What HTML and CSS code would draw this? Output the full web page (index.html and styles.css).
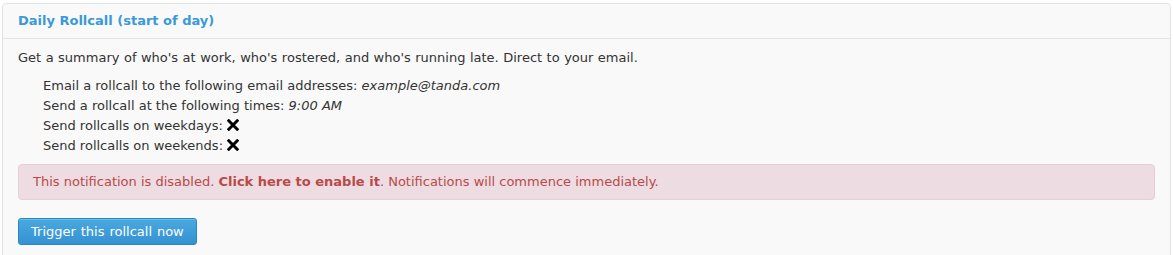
FILE: index.html
```html
<!DOCTYPE html>
<html>
<head>
<meta charset="utf-8">
<link rel="stylesheet" href="styles.css">
</head>
<body>
<div class="panel">
  <div class="panel-header">
    <h3 class="panel-title">Daily Rollcall (start of day)</h3>
  </div>
  <div class="panel-body">
    <p class="intro">Get a summary of who's at work, who's rostered, and who's running late. Direct to your email.</p>
    <ul class="settings">
      <li>Email a rollcall to the following email addresses: <em>example@tanda.com</em></li>
      <li>Send a rollcall at the following times: <em>9:00 AM</em></li>
      <li>Send rollcalls on weekdays: <svg class="cross" viewBox="0 0 12 12" width="12" height="12"><path d="M1.8 1.8 L10.2 10.2 M10.2 1.8 L1.8 10.2" stroke="#000" stroke-width="3" stroke-linecap="square"/></svg></li>
      <li>Send rollcalls on weekends: <svg class="cross" viewBox="0 0 12 12" width="12" height="12"><path d="M1.8 1.8 L10.2 10.2 M10.2 1.8 L1.8 10.2" stroke="#000" stroke-width="3" stroke-linecap="square"/></svg></li>
    </ul>
    <div class="alert">This notification is disabled. <strong>Click here to enable it</strong>. Notifications will commence immediately.</div>
    <button class="btn">Trigger this rollcall now</button>
  </div>
</div>
</body>
</html>
```
FILE: styles.css
```css
html, body {
  margin: 0;
  padding: 0;
  background: #ffffff;
}
body {
  padding: 3px 2px 0 2px;
  font-family: "DejaVu Sans", Verdana, sans-serif;
  font-size: 13px;
  line-height: 20px;
  color: #333333;
}
.panel {
  background: #f9f9f9;
  border: 1px solid #e3e3e3;
  border-radius: 4px;
  height: 270px;
}
.panel-header {
  height: 34px;
  border-bottom: 1px solid #e3e3e3;
  padding: 0 15px;
  display: flex;
  align-items: center;
}
.panel-title {
  margin: 0;
  font-size: 13px;
  font-weight: bold;
  color: #3a9ad9;
  line-height: 20px;
}
.panel-body {
  padding: 9px 15px 0 15px;
}
.intro {
  margin: 0 0 8px 0;
  word-spacing: 0.35px;
}
.settings {
  list-style: none;
  margin: 0 0 8px 0;
  padding: 0 0 0 25px;
}
.settings em {
  font-style: italic;
}
.cross {
  vertical-align: -1px;
}
.alert {
  background: #eedce3;
  border: 1px solid #e6cdd6;
  border-radius: 4px;
  color: #b94a48;
  padding: 7px 14px;
  margin-bottom: 18px;
}
.alert strong {
  font-weight: bold;
}
.btn {
  display: block;
  font-family: "DejaVu Sans", Verdana, sans-serif;
  font-size: 13px;
  line-height: 19px;
  color: #ffffff;
  padding: 3px 12px 3px 12px;
  word-spacing: 0.8px;
  background: linear-gradient(#4aa8e0, #3592d2);
  border: 1px solid #2d86c4;
  border-radius: 3px;
  box-shadow: inset 0 1px 0 rgba(255,255,255,0.2);
}
```
